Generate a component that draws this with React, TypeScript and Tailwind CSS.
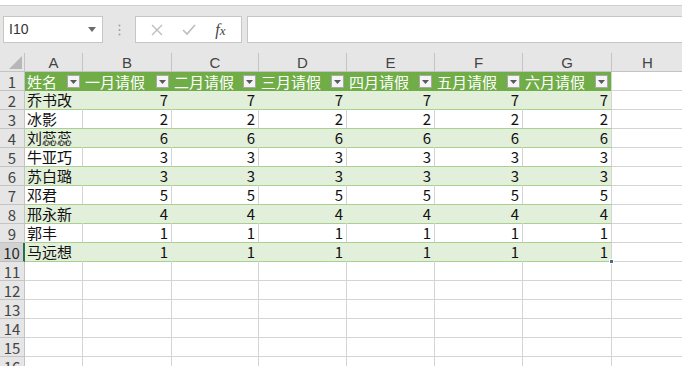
import React from "react";

const cols = [
  { key: "A", w: 58 },
  { key: "B", w: 89 },
  { key: "C", w: 87 },
  { key: "D", w: 88 },
  { key: "E", w: 88 },
  { key: "F", w: 88 },
  { key: "G", w: 89 },
];

const headers = ["姓名", "一月请假", "二月请假", "三月请假", "四月请假", "五月请假", "六月请假"];

const people: [string, number][] = [
  ["乔书改", 7],
  ["冰影", 2],
  ["刘蕊蕊", 6],
  ["牛亚巧", 3],
  ["苏白璐", 3],
  ["邓君", 5],
  ["邢永新", 4],
  ["郭丰", 1],
  ["马远想", 1],
];

const FilterButton = () => (
  <span className="absolute right-[3px] top-[3px] w-[13px] h-[13px] bg-[#f4f4f4] border border-[#a8a8a8] flex items-center justify-center">
    <svg width="7" height="4" viewBox="0 0 7 4">
      <path d="M0 0h7L3.5 4z" fill="#595959" />
    </svg>
  </span>
);

const RowHeader = ({ n, active }: { n: number; active?: boolean }) => (
  <div
    className={
      active
        ? "w-[25px] shrink-0 h-[19px] bg-[#d2d2d2] border-b border-[#bdbdbd] border-r-2 border-r-[#217346] text-center text-[15px] leading-[19px] text-[#262626]"
        : "w-[25px] shrink-0 h-[19px] bg-[#e6e6e6] border-b border-r border-[#c4c4c4] text-center text-[15px] leading-[19px] text-[#444]"
    }
  >
    {n}
  </div>
);

const HeaderRow = () => (
  <div className="flex h-[19px]">
    <RowHeader n={1} />
    {headers.map((h, i) => (
      <div
        key={h}
        style={{ width: cols[i].w }}
        className={
          i === 6
            ? "relative shrink-0 h-[19px] bg-[#70ad47] border-r border-[#d4d4d4] text-white text-[15px] leading-[19px] pl-[2px]"
            : "relative shrink-0 h-[19px] bg-[#70ad47] text-white text-[15px] leading-[19px] pl-[2px]"
        }
      >
        {h}
        <FilterButton />
      </div>
    ))}
    <div className="flex-1 h-[19px] bg-white border-b border-[#d4d4d4]" />
  </div>
);

const DataRow = ({ n, name, v }: { n: number; name: string; v: number }) => {
  const band = n % 2 === 0;
  return (
    <div className="flex h-[19px]">
      <RowHeader n={n} active={n === 10} />
      {cols.map((c, i) => (
        <div
          key={c.key}
          style={{ width: c.w }}
          className={[
            "relative shrink-0 h-[19px] border-b border-b-[#a9d08e] border-r text-[15px] leading-[18px] text-[#111]",
            band ? "bg-[#e2efda]" : "bg-white",
            i === 6 ? "border-r-[#d4d4d4]" : band ? "border-r-[#e2efda]" : "border-r-[#d4d4d4]",
            i === 0 ? "pl-[2px]" : "text-right pr-[3px]",
          ].join(" ")}
        >
          {i === 0 ? name : v}
          {n === 10 && i === 6 && (
            <span className="absolute right-[-3px] bottom-[-3px] w-[5px] h-[5px] bg-[#4a6a8a] border border-white" />
          )}
        </div>
      ))}
      <div className="flex-1 h-[19px] bg-white border-b border-[#d4d4d4]" />
    </div>
  );
};

const EmptyRow = ({ n }: { n: number }) => (
  <div className="flex h-[19px]">
    <RowHeader n={n} />
    {cols.map((c) => (
      <div
        key={c.key}
        style={{ width: c.w }}
        className="shrink-0 h-[19px] bg-white border-b border-r border-[#d4d4d4]"
      />
    ))}
    <div className="flex-1 h-[19px] bg-white border-b border-[#d4d4d4]" />
  </div>
);

export default function App() {
  return (
    <div className="w-[682px] h-[366px] overflow-hidden bg-[#e6e6e6] font-['Noto_Sans_CJK_SC','Noto_Sans',sans-serif]">
      <div className="h-[6px] bg-white border-b border-[#d0d0d0]" />

      <div className="h-[47px] flex items-start pt-[10px]">
        <div className="ml-[3px] w-[100px] h-[27px] bg-white border border-[#c6c6c6] flex items-center justify-between pl-[5px] pr-[6px]">
          <span className="text-[14px] text-[#333] font-['Liberation_Sans',sans-serif]">I10</span>
          <svg width="8" height="5" viewBox="0 0 8 5">
            <path d="M0 0h8L4 5z" fill="#6b6b6b" />
          </svg>
        </div>
        <div className="w-[32px] h-[27px] flex items-center justify-center">
          <svg width="3" height="12" viewBox="0 0 3 12">
            <circle cx="1.5" cy="1.5" r="1" fill="#a0a0a0" />
            <circle cx="1.5" cy="6" r="1" fill="#a0a0a0" />
            <circle cx="1.5" cy="10.5" r="1" fill="#a0a0a0" />
          </svg>
        </div>
        <div className="w-[107px] h-[27px] bg-white border border-[#c6c6c6] flex items-center justify-around px-[6px]">
          <svg width="12" height="12" viewBox="0 0 12 12">
            <path d="M1 1l10 10M11 1L1 11" stroke="#bdbdbd" strokeWidth="1.4" />
          </svg>
          <svg width="14" height="12" viewBox="0 0 14 12">
            <path d="M1 6l4 4 8-9" stroke="#bdbdbd" strokeWidth="1.6" fill="none" />
          </svg>
          <span className="text-[16px] leading-none italic text-[#444] font-['Liberation_Serif',serif]">
            f<span className="text-[13px]">x</span>
          </span>
        </div>
        <div className="ml-[5px] flex-1 h-[27px] bg-white border border-[#c6c6c6] mr-[-4px]" />
      </div>

      <div className="flex h-[19px]">
        <div className="relative w-[25px] shrink-0 h-[19px] bg-[#e6e6e6] border-r border-b border-[#c4c4c4]">
          <svg className="absolute right-[2px] bottom-[2px]" width="13" height="13" viewBox="0 0 13 13">
            <path d="M13 0v13H0z" fill="#b7b7b7" />
          </svg>
        </div>
        {cols.map((c) => (
          <div
            key={c.key}
            style={{ width: c.w }}
            className="shrink-0 h-[19px] bg-[#e6e6e6] border-r border-b border-[#c4c4c4] text-center text-[15px] leading-[19px] text-[#444] font-['Liberation_Sans',sans-serif]"
          >
            {c.key}
          </div>
        ))}
        <div className="w-[72px] shrink-0 h-[19px] bg-[#e6e6e6] border-r border-b border-[#c4c4c4] text-center text-[15px] leading-[19px] text-[#444] font-['Liberation_Sans',sans-serif]">
          H
        </div>
      </div>

      <HeaderRow />
      {people.map(([name, v], i) => (
        <DataRow key={name} n={i + 2} name={name} v={v} />
      ))}
      {[11, 12, 13, 14, 15, 16].map((n) => (
        <EmptyRow key={n} n={n} />
      ))}
    </div>
  );
}
